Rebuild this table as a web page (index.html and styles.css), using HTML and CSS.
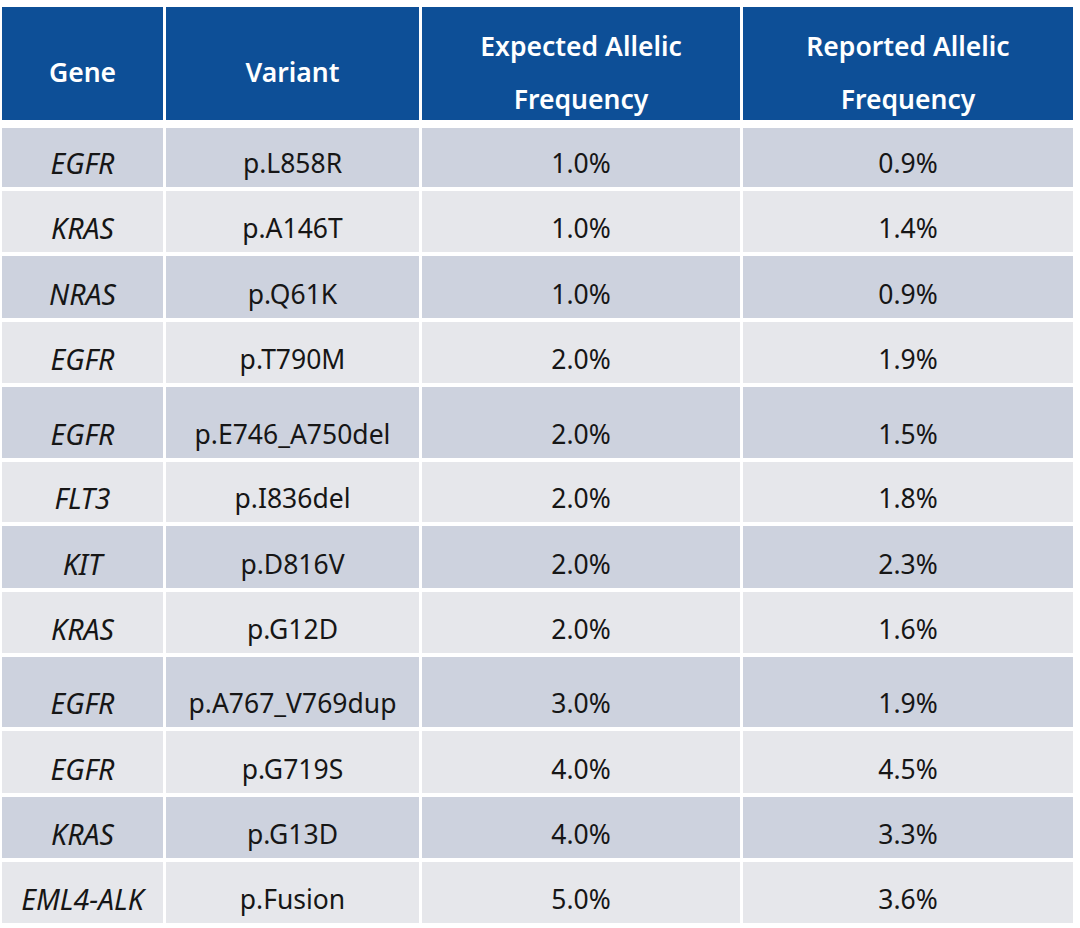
FILE: index.html
```html
<!DOCTYPE html>
<html lang="en">
<head>
<meta charset="utf-8">
<title>Allelic Frequency Table</title>
<link rel="stylesheet" href="styles.css">
</head>
<body>
<div class="table">
  <div class="head">
    <div class="hcell">Gene</div>
    <div class="hcell">Variant</div>
    <div class="hcell">Expected Allelic<br>Frequency</div>
    <div class="hcell">Reported Allelic<br>Frequency</div>
  </div>
  <div class="body">
    <div class="cell dark gene">EGFR</div><div class="cell dark">p.L858R</div><div class="cell dark">1.0%</div><div class="cell dark">0.9%</div>
    <div class="cell light gene">KRAS</div><div class="cell light">p.A146T</div><div class="cell light">1.0%</div><div class="cell light">1.4%</div>
    <div class="cell dark gene">NRAS</div><div class="cell dark">p.Q61K</div><div class="cell dark">1.0%</div><div class="cell dark">0.9%</div>
    <div class="cell light gene">EGFR</div><div class="cell light">p.T790M</div><div class="cell light">2.0%</div><div class="cell light">1.9%</div>
    <div class="cell dark gene">EGFR</div><div class="cell dark">p.E746_A750del</div><div class="cell dark">2.0%</div><div class="cell dark">1.5%</div>
    <div class="cell light gene">FLT3</div><div class="cell light">p.I836del</div><div class="cell light">2.0%</div><div class="cell light">1.8%</div>
    <div class="cell dark gene">KIT</div><div class="cell dark">p.D816V</div><div class="cell dark">2.0%</div><div class="cell dark">2.3%</div>
    <div class="cell light gene">KRAS</div><div class="cell light">p.G12D</div><div class="cell light">2.0%</div><div class="cell light">1.6%</div>
    <div class="cell dark gene">EGFR</div><div class="cell dark">p.A767_V769dup</div><div class="cell dark">3.0%</div><div class="cell dark">1.9%</div>
    <div class="cell light gene">EGFR</div><div class="cell light">p.G719S</div><div class="cell light">4.0%</div><div class="cell light">4.5%</div>
    <div class="cell dark gene">KRAS</div><div class="cell dark">p.G13D</div><div class="cell dark">4.0%</div><div class="cell dark">3.3%</div>
    <div class="cell light gene">EML4-ALK</div><div class="cell light">p.Fusion</div><div class="cell light">5.0%</div><div class="cell light">3.6%</div>
  </div>
</div>
</body>
</html>
```
FILE: styles.css
```css
html, body {
  margin: 0;
  padding: 0;
  background: #ffffff;
}
body {
  padding: 7px 0 0 2px;
  font-family: "Noto Sans", "Open Sans", sans-serif;
}
.table {
  width: 1071px;
}
.head, .body {
  display: grid;
  grid-template-columns: 161px 253px 318px 330px;
  column-gap: 3px;
}
.head {
  grid-template-rows: 113px;
}
.hcell {
  background: #0d4f97;
  color: #ffffff;
  font-weight: 600;
  font-size: 26.5px;
  line-height: 53px;
  padding-top: 18px;
  display: flex;
  align-items: center;
  justify-content: center;
  text-align: center;
  box-sizing: border-box;
  overflow: visible;
}
.body {
  margin-top: 8px;
  row-gap: 4px;
  grid-template-rows: 59px 61px 62px 61px 71px 60px 62px 61px 70px 62px 61px 61px;
}
.cell {
  display: flex;
  align-items: flex-end;
  justify-content: center;
  padding-bottom: 9px;
  box-sizing: border-box;
  font-size: 26.5px;
  line-height: 30px;
  color: #161616;
}
.dark {
  background: #cdd2de;
}
.light {
  background: #e6e7eb;
}
.gene {
  font-style: italic;
  font-size: 28.5px;
}
```
